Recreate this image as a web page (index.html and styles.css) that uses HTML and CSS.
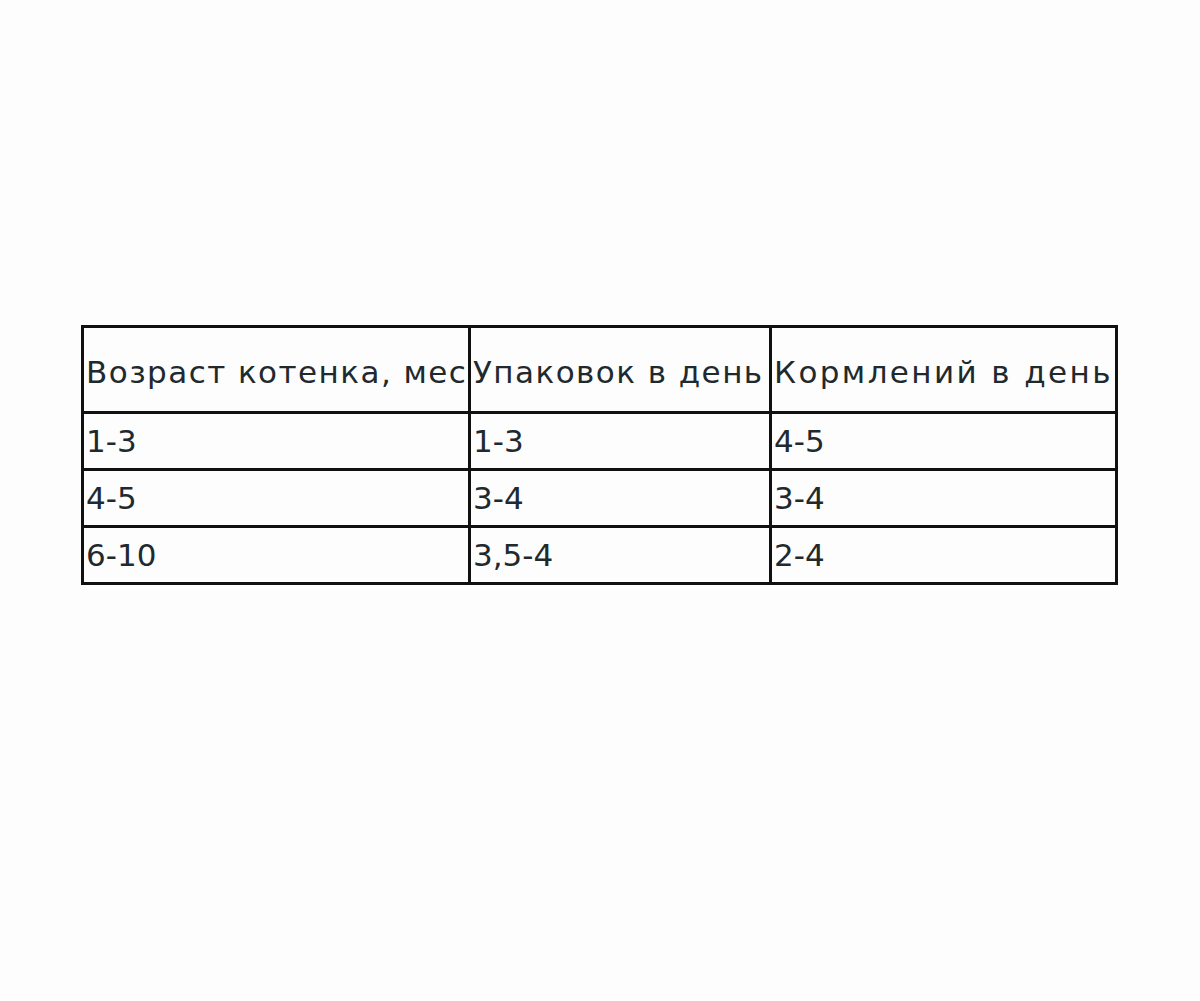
FILE: index.html
```html
<!DOCTYPE html>
<html lang="ru">
<head>
<meta charset="utf-8">
<link rel="stylesheet" href="styles.css">
</head>
<body>
<main class="page">
  <table class="feed">
    <colgroup>
      <col class="c1"><col class="c2"><col class="c3">
    </colgroup>
    <tr class="head">
      <td>Возраст котенка, мес</td>
      <td>Упаковок в день</td>
      <td class="wide">Кормлений в день</td>
    </tr>
    <tr><td>1-3</td><td>1-3</td><td>4-5</td></tr>
    <tr><td>4-5</td><td>3-4</td><td>3-4</td></tr>
    <tr><td>6-10</td><td>3,5-4</td><td>2-4</td></tr>
  </table>
</main>
</body>
</html>
```

FILE: styles.css
```css
html, body {
  margin: 0;
  padding: 0;
  background: #fdfdfd;
}
.page {
  padding: 325px 0 0 81px;
  height: 1001px;
  box-sizing: border-box;
}
.feed {
  border-collapse: collapse;
  table-layout: fixed;
  width: 1034px;
  font-family: "DejaVu Sans", "Open Sans", sans-serif;
  font-size: 31px;
  color: #1e2a2e;
}
.c1 { width: 387px; }
.c2 { width: 301px; }
.c3 { width: 346px; }
.feed td {
  border: 3px solid #111;
  padding: 0 0 0 2px;
  white-space: nowrap;
  overflow: visible;
  vertical-align: middle;
  height: 57px;
  box-sizing: border-box;
  line-height: 1;
  letter-spacing: 0;
}
.feed .head td {
  height: 86px;
  padding-top: 6px;
  letter-spacing: 1.45px;
}
.feed .head td.wide {
  letter-spacing: 2.4px;
}
```
